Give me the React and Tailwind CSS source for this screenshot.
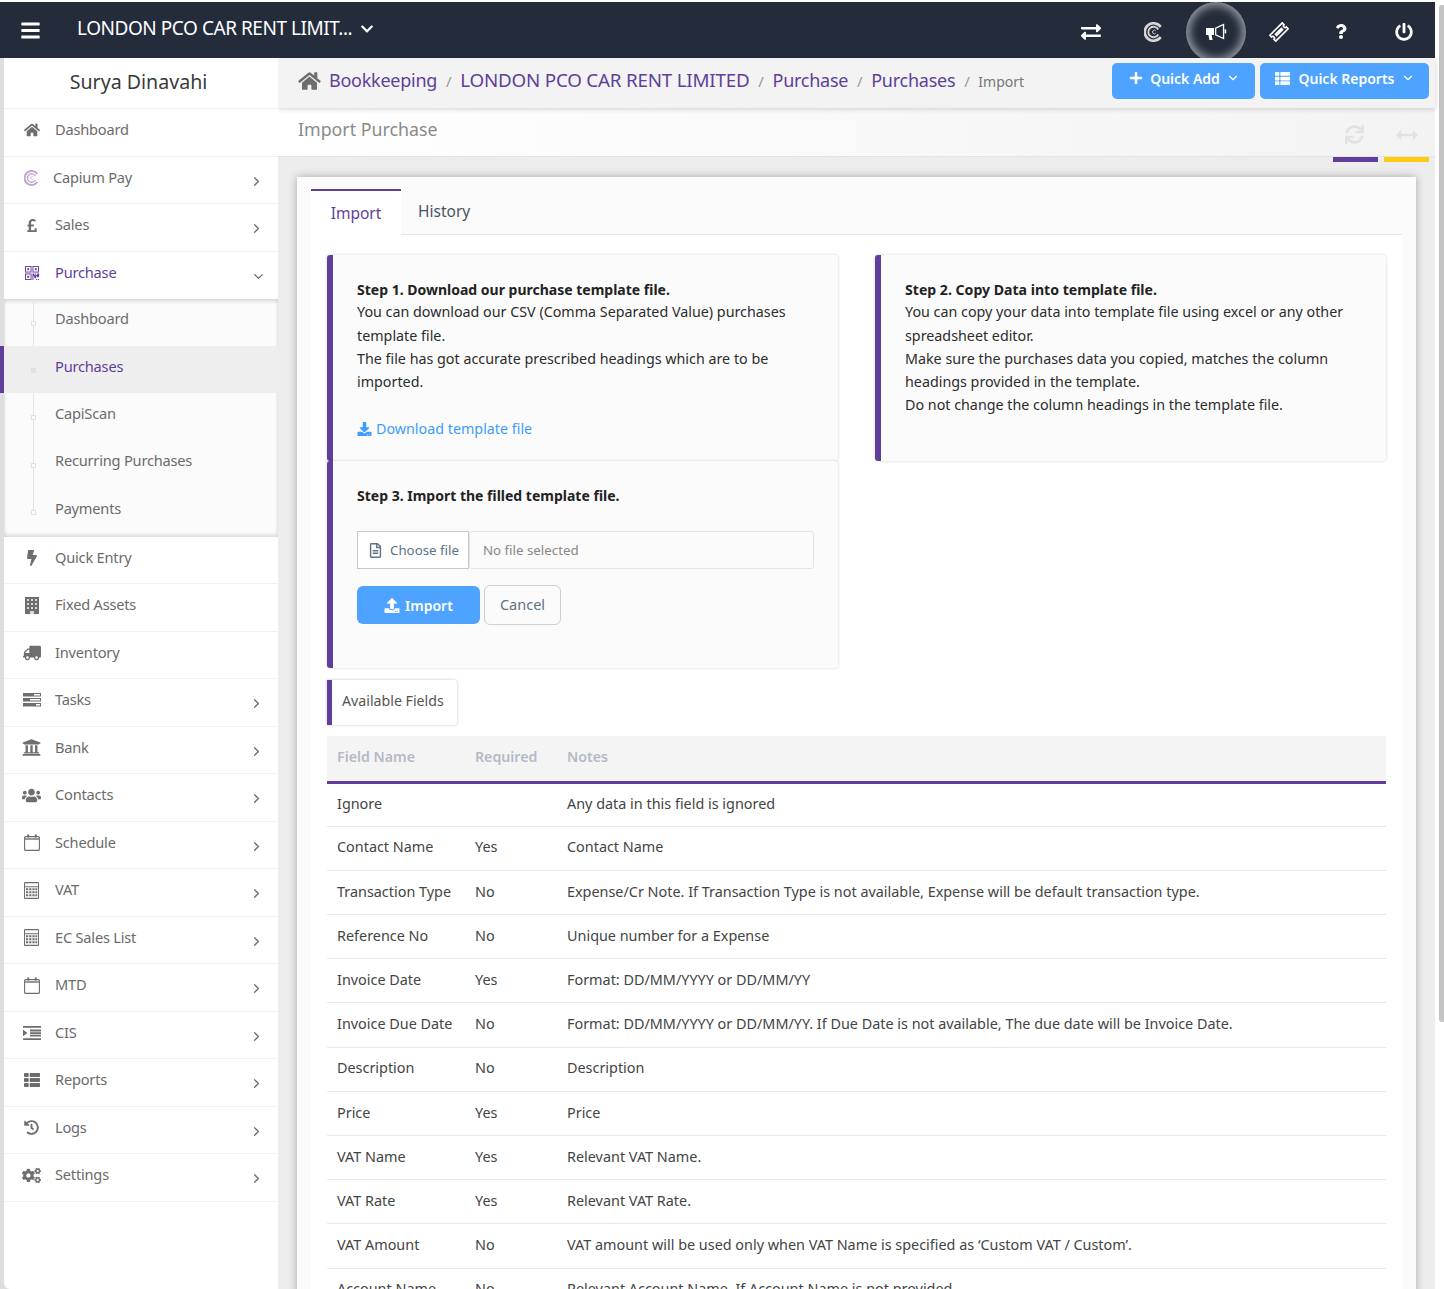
import React from "react";
import {
  FaHome, FaPoundSign, FaBolt, FaTruck, FaUniversity, FaUsers, FaThList, FaHistory, FaCogs,
  FaExchangeAlt, FaQuestion, FaPowerOff, FaPlus, FaSync, FaDownload, FaUpload, FaRegFileAlt, FaBars,
  FaChevronDown,
} from "react-icons/fa";
import { ChevronRight, ChevronDown } from "lucide-react";

const CapiumLogo = ({ className }) => (
  <svg viewBox="0 0 24 24" className={className} fill="none" stroke="currentColor">
    <path d="M20 6A10.5 10.5 0 1 0 20 18" strokeWidth="3.2" />
    <path d="M17 9A6.3 6.3 0 1 0 17 15" strokeWidth="2.2" />
    <path d="M14 10.6A2.2 2.2 0 1 0 14 13.4" strokeWidth="1.1" />
  </svg>
);

const TasksIcon = ({ className }) => (
  <svg viewBox="0 0 18 14" className={className} fill="currentColor">
    <path d="M0 0h18v3.6H0zM0 5h18v3.6H0zM0 10h18v3.6H0z" />
    <path d="M11 1h6v1.4h-6zM7 6h10v1.4H7zM13 11h4v1.4h-4z" fill="#fff" />
  </svg>
);

const QrIcon = ({ className }) => (
  <svg viewBox="0 0 15 15" className={className} fill="none" stroke="currentColor" strokeWidth="1">
    <rect x="0.5" y="0.5" width="6" height="6" />
    <rect x="8.5" y="0.5" width="6" height="6" />
    <rect x="0.5" y="8.5" width="6" height="6" />
    <path d="M2.5 2.5h2v2h-2zM10.5 2.5h2v2h-2zM2.5 10.5h2v2h-2z" fill="currentColor" stroke="none" />
    <path d="M8 8h2v2h1v-2h1v2h1V8h2v4h-2v-1h-1v2h-2v-2H9v4H8zM12 14h1v1h-1zM14 14h1v1h-1z" fill="currentColor" stroke="none" />
  </svg>
);

const BuildingIcon = ({ className }) => (
  <svg viewBox="0 0 14 17" className={className} fill="currentColor">
    <path d="M0 0h14v17H0z" />
    <path
      d="M2 2h2v2H2zM6 2h2v2H6zM10 2h2v2h-2zM2 6h2v2H2zM6 6h2v2H6zM10 6h2v2h-2zM2 10h2v2H2zM6 10h2v2H6zM10 10h2v2h-2zM5 14h4v3H5z"
      fill="#fff"
      opacity="0.75"
    />
  </svg>
);

const CalendarIcon = ({ className }) => (
  <svg viewBox="0 0 16 17" className={className} fill="none" stroke="currentColor">
    <rect x="0.6" y="2.6" width="14.8" height="13.8" rx="1" strokeWidth="1.1" />
    <path d="M1 5h14" strokeWidth="1.4" />
    <path d="M4.2 0.5v3M11.8 0.5v3" strokeWidth="2" />
  </svg>
);

const CalcIcon = ({ className }) => (
  <svg viewBox="0 0 15 17" className={className} fill="currentColor">
    <path d="M1 0h13a1 1 0 0 1 1 1v15a1 1 0 0 1-1 1H1a1 1 0 0 1-1-1V1a1 1 0 0 1 1-1zM1 1.2v3h13v-3zM1 5.2v10.6h13V5.2z" fillRule="evenodd" />
    <path d="M2 6.2h2.2v2H2zM5.2 6.2h2.2v2H5.2zM8.4 6.2h2.2v2H8.4zM11.4 6.2h1.8v2h-1.8zM2 9.2h2.2v2H2zM5.2 9.2h2.2v2H5.2zM8.4 9.2h2.2v2H8.4zM11.4 9.2h1.8v2h-1.8zM2 12.2h2.2v2H2zM5.2 12.2h2.2v2H5.2zM8.4 12.2h2.2v2H8.4zM11.4 12.2h1.8v2h-1.8z" />
  </svg>
);

const IndentIcon = ({ className }) => (
  <svg viewBox="0 0 18 14" className={className} fill="currentColor">
    <path d="M0 0h18v1.8H0zM7 3.6h11v1.8H7zM7 6.2h11v1.8H7zM7 8.8h11v1.8H7zM0 12.2h18V14H0z" />
    <path d="M0 3.6l4.4 3.3L0 10.2z" />
  </svg>
);

const BullhornIcon = ({ className }) => (
  <svg viewBox="0 0 21 19" className={className} fill="currentColor">
    <path d="M0 6h8v7H5.6l1 5H3.4L2.4 13H0z" />
    <path d="M9 5.8L18.2 1.4v16.2L9 13.2zM10.3 6.6v5.8l6.6 3.1V3.5z" fillRule="evenodd" />
    <path d="M18.6 7.4h1.6v4h-1.6z" />
  </svg>
);

const TicketIcon = ({ className }) => (
  <svg viewBox="0 0 24 24" className={className} fill="none" stroke="currentColor">
    <g transform="rotate(-45 12 12)">
      <path d="M1.5 7h21v3a2 2 0 0 0 0 4v3h-21v-3a2 2 0 0 0 0-4z" strokeWidth="2" />
      <path d="M6 10h12v4H6z" fill="currentColor" stroke="none" />
    </g>
  </svg>
);

const WidthIcon = ({ className }) => (
  <svg viewBox="0 0 22 10" className={className} fill="currentColor">
    <path d="M0 5l5-5v3.8h12V0l5 5-5 5V6.2H5V10z" />
  </svg>
);

const menuTop = [
  { label: "Dashboard", icon: <FaHome className="w-[16px] h-[16px]" /> },
  { label: "Capium Pay", icon: <CapiumLogo className="w-[16px] h-[16px] text-[#c3a9d3]" />, arrow: true, shift: true },
  { label: "Sales", icon: <FaPoundSign className="w-[14px] h-[15px]" />, arrow: true },
];

const subMenu = ["Dashboard", "Purchases", "CapiScan", "Recurring Purchases", "Payments"];

const menuBottom = [
  { label: "Quick Entry", icon: <FaBolt className="w-[12px] h-[16px]" /> },
  { label: "Fixed Assets", icon: <BuildingIcon className="w-[14px] h-[17px]" /> },
  { label: "Inventory", icon: <FaTruck className="w-[18px] h-[16px] -scale-x-100" /> },
  { label: "Tasks", icon: <TasksIcon className="w-[18px] h-[14px]" />, arrow: true },
  { label: "Bank", icon: <FaUniversity className="w-[19px] h-[19px]" />, arrow: true },
  { label: "Contacts", icon: <FaUsers className="w-[19px] h-[19px]" />, arrow: true },
  { label: "Schedule", icon: <CalendarIcon className="w-[16px] h-[17px]" />, arrow: true },
  { label: "VAT", icon: <CalcIcon className="w-[15px] h-[17px]" />, arrow: true },
  { label: "EC Sales List", icon: <CalcIcon className="w-[15px] h-[17px]" />, arrow: true },
  { label: "MTD", icon: <CalendarIcon className="w-[16px] h-[17px]" />, arrow: true },
  { label: "CIS", icon: <IndentIcon className="w-[18px] h-[14px]" />, arrow: true },
  { label: "Reports", icon: <FaThList className="w-[18px] h-[16px]" />, arrow: true },
  { label: "Logs", icon: <FaHistory className="w-[15px] h-[15px]" />, arrow: true },
  { label: "Settings", icon: <FaCogs className="w-[19px] h-[17px]" />, arrow: true },
];

const fields = [
  ["Ignore", "", "Any data in this field is ignored"],
  ["Contact Name", "Yes", "Contact Name"],
  ["Transaction Type", "No", "Expense/Cr Note. If Transaction Type is not available, Expense will be default transaction type."],
  ["Reference No", "No", "Unique number for a Expense"],
  ["Invoice Date", "Yes", "Format: DD/MM/YYYY or DD/MM/YY"],
  ["Invoice Due Date", "No", "Format: DD/MM/YYYY or DD/MM/YY. If Due Date is not available, The due date will be Invoice Date."],
  ["Description", "No", "Description"],
  ["Price", "Yes", "Price"],
  ["VAT Name", "Yes", "Relevant VAT Name."],
  ["VAT Rate", "Yes", "Relevant VAT Rate."],
  ["VAT Amount", "No", "VAT amount will be used only when VAT Name is specified as ‘Custom VAT / Custom’."],
  ["Account Name", "No", "Relevant Account Name. If Account Name is not provided"],
];

const MenuRow = ({ item }) => (
  <div className="h-[47.5px] flex items-center border-b border-[#f1f1f1] pb-[4px] text-[#6b6b6b]">
    <span className="w-[51px] pl-[9px] pr-[5px] flex justify-center shrink-0 text-[#6e6e6e]">{item.icon}</span>
    <span className={`text-[14.6px] tracking-[-0.2px] ${item.shift ? "-ml-[2px]" : ""}`}>{item.label}</span>
    {item.arrow && <ChevronRight className="ml-auto mr-[14px] mt-[7px] w-[15px] h-[15px]" strokeWidth={2} />}
  </div>
);

const Sidebar = () => (
  <aside className="w-[274px] shrink-0 bg-white rounded-bl-[6px] relative z-10">
    <div className="h-[51px] flex items-center justify-center border-b border-[#f1f1f1] text-[19.6px] text-[#3a3a3a] pb-[2px] pr-[5px]">
      Surya Dinavahi
    </div>
    {menuTop.map((item) => (
      <MenuRow key={item.label} item={item} />
    ))}
    <div className="h-[47px] flex items-center pb-[4px] text-[#5f3f99]">
      <span className="w-[51px] pl-[9px] pr-[5px] flex justify-center shrink-0">
        <QrIcon className="w-[14px] h-[14px]" />
      </span>
      <span className="text-[14.6px] tracking-[-0.2px]">Purchase</span>
      <ChevronDown className="ml-auto mr-[12px] mt-[7px] w-[15px] h-[15px] text-[#6b6b6b]" strokeWidth={2} />
    </div>
    <div className="relative h-[238px] bg-[#fbfbfb] shadow-[inset_0_3px_4px_-1px_rgba(0,0,0,0.16),inset_0_-3px_4px_-1px_rgba(0,0,0,0.14)]">
      <div className="absolute left-[29px] top-0 bottom-[22px] w-px bg-[#e4e4e4]"></div>
      {subMenu.map((label) => {
        const active = label === "Purchases";
        return (
          <div
            key={label}
            className={`relative h-[47.4px] flex items-center pl-[51px] text-[14.6px] tracking-[-0.2px] pb-[6px] ${
              active ? "bg-[#eeeeee] text-[#5f3f99]" : "text-[#6b6b6b]"
            }`}
          >
            {active && <span className="absolute -left-[4px] top-0 bottom-0 w-[4px] bg-[#5f3f99]"></span>}
            <span
              className={`absolute left-[27px] top-[22px] w-[5px] h-[5px] border ${
                active ? "bg-[#e2e2e2] border-[#e2e2e2]" : "bg-white border-[#e2e2e2]"
              }`}
            ></span>
            {label}
          </div>
        );
      })}
    </div>
    {menuBottom.map((item) => (
      <MenuRow key={item.label} item={item} />
    ))}
  </aside>
);

const Panel = ({ className = "", children }) => (
  <div className={`bg-[#fbfbfb] border-l-[6px] border-[#5f3f99] rounded-[3px] shadow-[0_0_3px_rgba(0,0,0,0.18)] ${className}`}>
    {children}
  </div>
);

const Slash = () => <span className="w-[23px] text-center text-[15px] text-[#999]">/</span>;

export default function App() {
  return (
    <div
      className="relative h-screen w-full overflow-hidden bg-white flex flex-col pt-[2px] text-[15px]"
      style={{ fontFamily: '"Noto Sans", sans-serif' }}
    >
      {/* page scrollbar thumb */}
      <div className="absolute right-0 top-[5px] w-[5px] h-[1017px] bg-[#c4c4c4] rounded-l-[3px]"></div>

      <header className="h-14 shrink-0 w-[1435px] bg-[#242c3b] flex items-center text-white overflow-hidden">
        <FaBars className="ml-[21px] w-[19px] h-[21px]" />
        <span className="ml-[37px] text-[19px] tracking-[-0.45px] pb-[3px]">LONDON PCO CAR RENT LIMIT...</span>
        <FaChevronDown className="ml-[8px] w-[14px] h-[14px] mb-[2px]" />
        <nav className="ml-auto flex items-center pt-[3px]">
          <span className="w-[62.5px] flex justify-center"><FaExchangeAlt className="w-[20px] h-[20px]" /></span>
          <span className="w-[62.5px] flex justify-center"><CapiumLogo className="w-[20px] h-[20px] text-[#d6d6d6]" /></span>
          <span className="w-[62.5px] flex justify-center">
            <span className="w-[60px] h-[60px] rounded-full flex items-center justify-center shadow-[inset_0_0_9px_4px_rgba(255,255,255,0.5)]">
              <BullhornIcon className="w-[21px] h-[19px]" />
            </span>
          </span>
          <span className="w-[62.5px] flex justify-center"><TicketIcon className="w-[20px] h-[20px]" /></span>
          <span className="w-[62.5px] flex justify-center"><FaQuestion className="w-[12px] h-[15px]" /></span>
          <span className="w-[62.5px] flex justify-center"><FaPowerOff className="w-[18px] h-[18px]" /></span>
        </nav>
      </header>

      <div className="flex-1 min-h-0 flex bg-white">
        <div className="flex w-[1435px] shrink-0 pl-1 min-h-0 bg-[#dedede]">
          <Sidebar />
          <main className="flex-1 min-w-0 bg-[#ededed] relative">
            <div className="h-[50px] bg-[#f3f3f3] shadow-[0_1px_5px_rgba(0,0,0,0.18)] relative z-[1] flex items-center pl-[20px] pr-[6px]">
              <FaHome className="w-[23px] h-[20px] text-[#6e6e6e] mb-[4px]" />
              <div className="ml-[8px] flex items-baseline text-[18px] text-[#5f3f99] tracking-[-0.25px] pb-[6px]">
                <span>Bookkeeping</span>
                <Slash />
                <span className="text-[18.8px] tracking-[-0.2px]">LONDON PCO CAR RENT LIMITED</span>
                <Slash />
                <span>Purchase</span>
                <Slash />
                <span>Purchases</span>
                <Slash />
                <span className="text-[14px] text-[#777] tracking-normal">Import</span>
              </div>
              <div className="ml-auto flex gap-[5px] -mt-[4px]">
                <button className="h-[36px] w-[143px] rounded-[5px] bg-[#4da3ff] text-white text-[14px] font-semibold flex items-center justify-center pb-[6px]">
                  <FaPlus className="w-[14px] h-[14px] mr-[7px] ml-[2px]" />
                  Quick Add
                  <ChevronDown className="w-[14px] h-[14px] ml-[6px]" />
                </button>
                <button className="h-[36px] w-[169px] rounded-[5px] bg-[#4da3ff] text-white text-[14px] font-semibold flex items-center justify-center pb-[6px]">
                  <FaThList className="w-[17px] h-[15px] mr-[7px]" />
                  Quick Reports
                  <ChevronDown className="w-[14px] h-[14px] ml-[6px]" />
                </button>
              </div>
            </div>

            <div className="h-[49px] bg-gradient-to-r from-white to-[#f3f3f3] border-b border-[#e4e4e4] flex items-center pl-[20px] pr-[17px]">
              <h1 className="text-[17.8px] text-[#8a8a8a] -mt-[5px]">Import Purchase</h1>
              <FaSync className="ml-auto w-[19px] h-[19px] text-[#e2e2e2] mt-[5px]" />
              <WidthIcon className="ml-[32px] w-[22px] h-[10px] text-[#e2e2e2] mt-[5px]" />
            </div>
            <span className="absolute left-[1055px] top-[99px] w-[45px] h-[5px] bg-[#5f3f99]"></span>
            <span className="absolute left-[1106px] top-[99px] w-[45px] h-[5px] bg-[#fdcb10]"></span>

            <section className="ml-[19px] mr-[19px] mt-[20px] bg-[#fbfbfb] shadow-[0_0_8px_rgba(0,0,0,0.3)] px-[14px] pt-[12px] h-[1200px]">
              <div className="flex h-[46px] border-b border-[#e4e4e4]">
                <div className="w-[90px] h-[47px] bg-white border-t-2 border-[#5f3f99] flex items-center justify-center text-[15.5px] text-[#5f3f99] relative">
                  Import
                </div>
                <div className="ml-[17px] flex items-center text-[15.5px] text-[#4c5263] mt-[1px]">History</div>
              </div>

              <div className="bg-white px-[16px] pt-[20px]">
                <div className="flex gap-[37px] items-start">
                  <div className="w-[511px] shrink-0">
                    <Panel className="h-[206px] pl-[24px] pt-[23px] pr-[20px] leading-[23.3px] text-[#2c2c2c] text-[14.3px]">
                      <p className="font-bold text-[14px] text-[#222]">Step 1. Download our purchase template file.</p>
                      <p className="-mt-px">You can download our CSV (Comma Separated Value) purchases template file.</p>
                      <p>The file has got accurate prescribed headings which are to be imported.</p>
                      <p className="mt-[24px] text-[#3e9bff] flex items-center">
                        <FaDownload className="w-[15px] h-[14px] mr-[4px]" />
                        Download template file
                      </p>
                    </Panel>
                    <Panel className="h-[207px] pl-[24px] pr-[24px] pt-[23px]">
                      <p className="font-bold text-[14px] leading-[23px] text-[#222]">Step 3. Import the filled template file.</p>
                      <div className="mt-[24px] flex h-[38px] text-[13.3px]">
                        <div className="w-[112px] border border-[#c8c8c8] bg-white flex items-center pl-[11px] pt-[2px] text-[#5d7384]">
                          <FaRegFileAlt className="w-[13px] h-[15px] mr-[8px] -mt-[2px]" />
                          Choose file
                        </div>
                        <div className="flex-1 border border-[#e4e4e4] rounded-[3px] flex items-center pl-[13px] pt-[2px] text-[#888]">No file selected</div>
                      </div>
                      <div className="mt-[17px] flex gap-[4px]">
                        <button className="w-[123px] h-[38px] rounded-[6px] bg-[#4da3ff] text-white text-[14px] font-semibold flex items-center justify-center">
                          <FaUpload className="w-[16px] h-[15px] mr-[5px]" />
                          Import
                        </button>
                        <button className="w-[77px] h-[40px] -mt-px rounded-[6px] border border-[#cfcfcf] text-[#5d7384] text-[14.5px]">Cancel</button>
                      </div>
                    </Panel>
                  </div>
                  <Panel className="w-[512px] h-[206px] pl-[24px] pt-[23px] pr-[20px] leading-[23.3px] text-[#2c2c2c] text-[14.3px]">
                    <p className="font-bold text-[14.1px] text-[#222]">Step 2. Copy Data into template file.</p>
                    <p className="-mt-px">You can copy your data into template file using excel or any other spreadsheet editor.</p>
                    <p>Make sure the purchases data you copied, matches the column headings provided in the template.</p>
                    <p>Do not change the column headings in the template file.</p>
                  </Panel>
                </div>

                <div className="mt-[12px] w-[130px] h-[45px] bg-white border-l-[5px] border-[#5f3f99] shadow-[0_0_3px_rgba(0,0,0,0.25)] rounded-r-[3px] flex items-center pl-[10px] pb-[4px] text-[14.2px] text-[#555]">
                  Available Fields
                </div>

                <table className="mt-[11px] w-[1059px] table-fixed text-left text-[14.4px] text-[#444]">
                  <thead>
                    <tr className="h-[46px] bg-[#f4f4f4] border-b-[3px] border-[#5f3f99] text-[14.2px] text-[#b5bac6]">
                      <th className="w-[148px] pl-[10px] pb-[4px] font-semibold">Field Name</th>
                      <th className="w-[92px] pb-[4px] font-semibold">Required</th>
                      <th className="pb-[4px] font-semibold">Notes</th>
                    </tr>
                  </thead>
                  <tbody>
                    {fields.map((row) => (
                      <tr key={row[0]} className="h-[44.2px] border-b border-[#e8e8e8]">
                        <td className="pl-[10px] pb-[2px] whitespace-nowrap">{row[0]}</td>
                        <td className="pb-[2px]">{row[1]}</td>
                        <td className="pb-[2px]">{row[2]}</td>
                      </tr>
                    ))}
                  </tbody>
                </table>
              </div>
            </section>
          </main>
        </div>
      </div>
    </div>
  );
}
